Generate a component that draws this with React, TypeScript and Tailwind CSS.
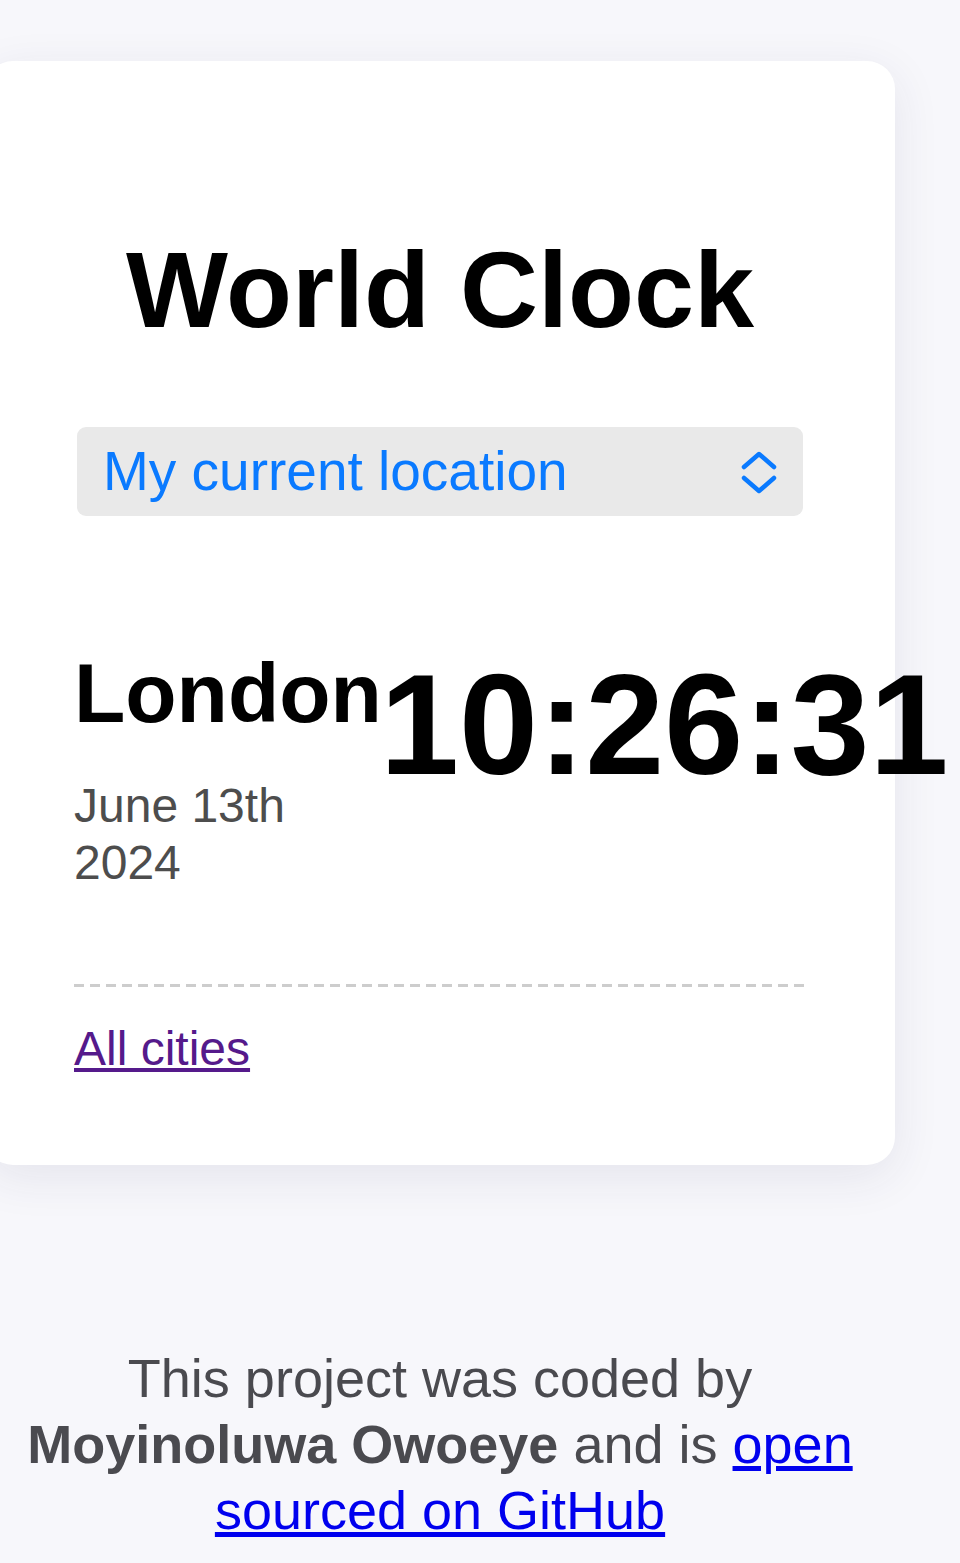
import { useState } from 'react';

const sans = "font-['Liberation_Sans',Helvetica,Arial,sans-serif]";

function Chevrons() {
  return (
    <svg width="40" height="48" viewBox="0 0 40 48" fill="none" className="shrink-0">
      <path d="M5 19 L20 6 L35 19" stroke="#0a7aff" strokeWidth="4.5" strokeLinecap="round" strokeLinejoin="round" />
      <path d="M5 30 L20 43 L35 30" stroke="#0a7aff" strokeWidth="4.5" strokeLinecap="round" strokeLinejoin="round" />
    </svg>
  );
}

function App() {
  const [city] = useState({ name: 'London', time: '10:26:31' });

  return (
    <div className={`min-h-screen bg-[#f7f7fb] pt-[61px] pb-[20px] overflow-hidden ${sans}`}>
      {/* card */}
      <div className="w-[910px] -ml-[15px] bg-white rounded-[28px] shadow-[0_12px_48px_rgba(40,40,90,0.09)] px-[89px] pt-[167px] pb-[87px]">
        <h1 className="text-[108px] font-bold leading-[1.15] text-center text-black">World Clock</h1>

        {/* select */}
        <div className="mt-[75px] mx-[3px] h-[89px] bg-[#e9e9e9] rounded-[9px] flex items-center justify-between pl-[26px] pr-[24px]">
          <span className="text-[55px] text-[#0a7aff] leading-none">My current location</span>
          <Chevrons />
        </div>

        {/* city row */}
        <div className="mt-[129px] flex items-start">
          <div className="w-[306px] shrink-0">
            <div className="text-[84px] font-bold leading-[1.15] text-black">{city.name}</div>
            <div className="mt-[35px] text-[48px] leading-[1.2] text-[#4d4d4d]">
              June 13th
              <br />
              2024
            </div>
          </div>
          <div className="text-[142px] font-bold leading-[1.15] text-black whitespace-nowrap -mt-[2px]">
            {city.time}
          </div>
        </div>

        {/* divider */}
        <div className="mt-[92px] h-[3px] bg-[repeating-linear-gradient(90deg,#cdcdcd_0_10px,transparent_10px_16px)]" />

        <a href="#" className="block mt-[33px] text-[48px] leading-[1.2] text-[#551a8b] underline w-fit">
          All cities
        </a>
      </div>

      {/* footer */}
      <footer className="w-[910px] -ml-[15px] mt-[180px] text-center text-[54px] leading-[66px] text-[#4a4a4f]">
        This project was coded by <strong className="font-bold">Moyinoluwa Owoeye</strong> and is{' '}
        <a href="#" className="text-[#0000ee] underline">
          open sourced on GitHub
        </a>
      </footer>
    </div>
  );
}

export default App;
